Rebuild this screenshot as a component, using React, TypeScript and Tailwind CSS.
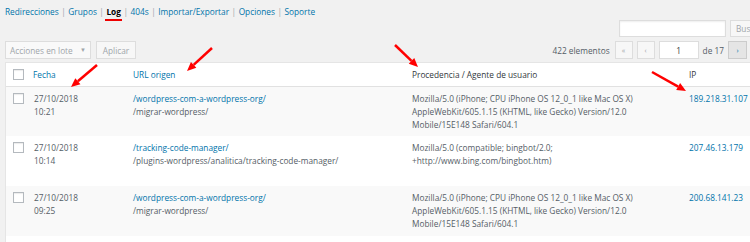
import React from "react";

const font = { fontFamily: '"Open Sans", "Noto Sans", sans-serif' };

const navItems = ["Redirecciones", "Grupos", "Log", "404s", "Importar/Exportar", "Opciones", "Soporte"];

const rows = [
  {
    date: "27/10/2018",
    time: "10:21",
    url: "/wordpress-com-a-wordpress-org/",
    target: "/migrar-wordpress/",
    agent: [
      "Mozilla/5.0 (iPhone; CPU iPhone OS 12_0_1 like Mac OS X)",
      "AppleWebKit/605.1.15 (KHTML, like Gecko) Version/12.0",
      "Mobile/15E148 Safari/604.1",
    ],
    ip: "189.218.31.107",
    h: "h-[49px]",
    bg: "bg-[#f9f9f9]",
  },
  {
    date: "27/10/2018",
    time: "10:14",
    url: "/tracking-code-manager/",
    target: "/plugins-wordpress/analitica/tracking-code-manager/",
    agent: ["Mozilla/5.0 (compatible; bingbot/2.0;", "+http://www.bing.com/bingbot.htm)"],
    ip: "207.46.13.179",
    h: "h-[50px]",
    bg: "bg-white",
  },
  {
    date: "27/10/2018",
    time: "09:25",
    url: "/wordpress-com-a-wordpress-org/",
    target: "/migrar-wordpress/",
    agent: [
      "Mozilla/5.0 (iPhone; CPU iPhone OS 12_0_1 like Mac OS X)",
      "AppleWebKit/605.1.15 (KHTML, like Gecko) Version/12.0",
      "Mobile/15E148 Safari/604.1",
    ],
    ip: "200.68.141.23",
    h: "h-[50px]",
    bg: "bg-[#f9f9f9]",
  },
];

function Checkbox() {
  return (
    <span className="block w-[11px] h-[11px] border border-[#b4b9be] bg-white shadow-[inset_0_1px_1px_rgba(0,0,0,0.08)]" />
  );
}

function Arrow({ x1, y1, x2, y2 }: { x1: number; y1: number; x2: number; y2: number }) {
  const a = Math.atan2(y2 - y1, x2 - x1);
  const len = 9;
  const w = 4;
  const bx = x2 - len * Math.cos(a);
  const by = y2 - len * Math.sin(a);
  const p1 = `${bx - w * Math.sin(a)},${by + w * Math.cos(a)}`;
  const p2 = `${bx + w * Math.sin(a)},${by - w * Math.cos(a)}`;
  return (
    <g>
      <line x1={x1} y1={y1} x2={bx} y2={by} stroke="#f00" strokeWidth={2.5} />
      <polygon points={`${x2},${y2} ${p1} ${p2}`} fill="#f00" />
    </g>
  );
}

export default function App() {
  return (
    <div className="relative w-[750px] h-[242px] overflow-hidden bg-[#f1f1f1] text-[8.3px] leading-[13px] text-[#555d66]" style={font}>
      {/* subsubsub */}
      <div className="flex items-center h-[22px] pl-[5px]">
        {navItems.map((item, i) => (
          <React.Fragment key={item}>
            {i > 0 && <span className="px-[2.5px] text-[#a0a5aa]">|</span>}
            {item === "Log" ? (
              <span className="relative font-bold text-black">
                Log
                <span className="absolute left-[-1px] right-[-1px] top-[14px] h-[2px] bg-[#e00]" />
              </span>
            ) : (
              <span className="text-[#0073aa]">{item}</span>
            )}
          </React.Fragment>
        ))}
      </div>

      {/* search */}
      <div className="flex justify-end gap-[4px] mt-[-2px] h-[17px] mr-[-20px]">
        <div className="w-[107px] h-[17px] bg-white border border-[#ddd] shadow-[inset_0_1px_2px_rgba(0,0,0,0.07)]" />
        <div className="w-[40px] h-[17px] border border-[#ddd] bg-[#f7f7f7] text-[#a0a5aa] pl-[5px] flex items-center">Buscar</div>
      </div>

      {/* tablenav */}
      <div className="flex items-center justify-between h-[18px] mt-[4px] pl-[5px] pr-[3px]">
        <div className="flex gap-[5px]">
          <div className="w-[86px] h-[18px] bg-white/60 border border-[#ddd] flex items-center justify-between px-[4px] text-[#a0a5aa]">
            <span>Acciones en lote</span>
            <span className="text-[6px]">▼</span>
          </div>
          <div className="w-[40px] h-[18px] border border-[#ddd] bg-[#f7f7f7] flex items-center justify-center text-[#a0a5aa]">Aplicar</div>
        </div>
        <div className="flex items-center gap-[4px]">
          <span className="mr-[1px]">422 elementos</span>
          <div className="w-[18px] h-[18px] border border-[#ddd] bg-[#f7f7f7] flex items-center justify-center text-[#a0a5aa] text-[7px]">«</div>
          <div className="w-[18px] h-[18px] border border-[#ddd] bg-[#f7f7f7] flex items-center justify-center text-[#a0a5aa] text-[7px]">‹</div>
          <div className="w-[40px] h-[18px] border border-[#ddd] bg-white flex items-center justify-center text-[#32373c]">1</div>
          <span className="text-[#555d66]">de 17</span>
          <div className="w-[19px] h-[18px] border border-[#ccc] bg-[#e5e5e5] flex items-center justify-center text-[#0073aa] text-[7px]">›</div>
        </div>
      </div>

      {/* table */}
      <div className="ml-[5px] mt-[3px] w-[760px] h-[200px] border-l border-t border-[#e5e5e5] bg-white">
        <div className="flex items-center h-[24px] border-b border-[#e1e1e1]">
          <div className="w-[22px] pl-[7px]">
            <Checkbox />
          </div>
          <div className="w-[99px] pl-[5px] text-[#0073aa]">Fecha</div>
          <div className="w-[279px] pl-[6px] text-[#0073aa]">URL origen</div>
          <div className="w-[277px] pl-[6px] text-[#32373c]">Procedencia / Agente de usuario</div>
          <div className="pl-[6px] text-[#32373c]">IP</div>
        </div>
        {rows.map((r, i) => (
          <div key={i} className={`flex items-start ${r.h} ${r.bg}`}>
            <div className="w-[22px] pl-[7px] pt-[6px]">
              <Checkbox />
            </div>
            <div className="w-[99px] pl-[6px] pt-[5px]">
              <div>{r.date}</div>
              <div>{r.time}</div>
            </div>
            <div className="w-[279px] pl-[6px] pt-[5px]">
              <div className="text-[#0073aa]">{r.url}</div>
              <div>{r.target}</div>
            </div>
            <div className="w-[277px] pl-[6px] pt-[5px]">
              {r.agent.map((l) => (
                <div key={l}>{l}</div>
              ))}
            </div>
            <div className="pl-[6px] pt-[5px] text-[#0073aa]">{r.ip}</div>
          </div>
        ))}
      </div>

      {/* annotation arrows */}
      <svg className="absolute inset-0 pointer-events-none" width={750} height={242}>
        <Arrow x1={97} y1={65} x2={71} y2={87} />
        <Arrow x1={212} y1={48} x2={187} y2={71} />
        <Arrow x1={395} y1={45} x2={418} y2={67} />
        <Arrow x1={652} y1={72} x2={686} y2={91} />
      </svg>
    </div>
  );
}
